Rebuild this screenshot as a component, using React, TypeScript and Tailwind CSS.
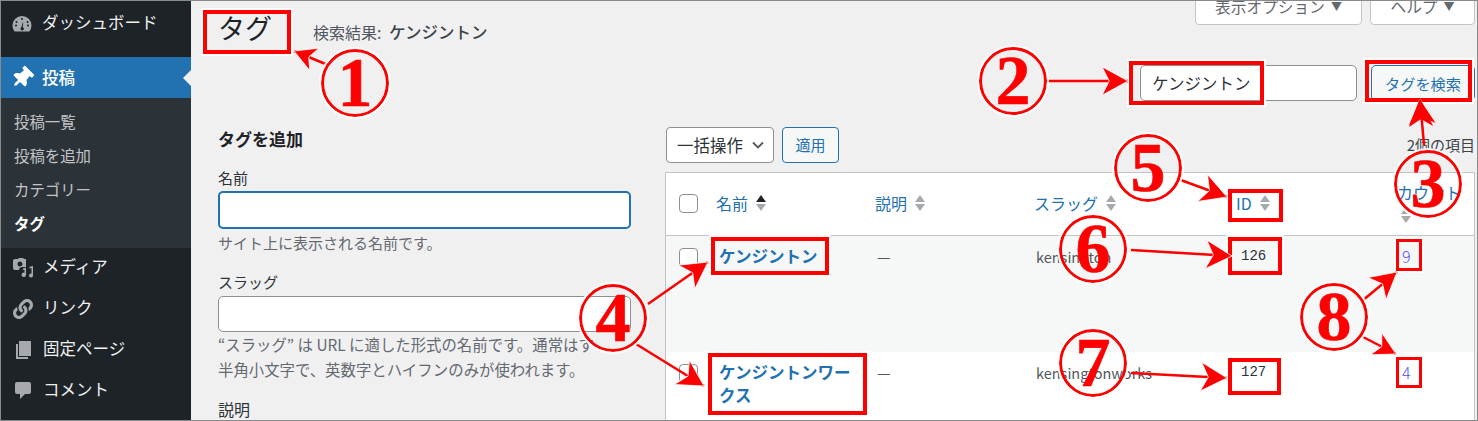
import React from "react";
import { FaLink, FaThumbtack } from "react-icons/fa";

const jp = "font-['Noto_Sans_CJK_JP','Noto_Sans',sans-serif]";

const SortArrows = ({ active, className = "ml-[7px]" }: { active?: boolean; className?: string }) => (
  <svg width="12" height="18" viewBox="0 0 12 18" className={`shrink-0 ${className}`}>
    <path d="M6 1l5 7H1z" className={active ? "fill-[#1d2327]" : "fill-[#a7aaad]"} />
    <path d="M6 17l5-7H1z" fill="#a7aaad" />
  </svg>
);

const Checkbox = () => (
  <span className="block h-[19px] w-[19px] rounded-[4px] border border-[#8c8f94] bg-white" />
);

const SubItem = ({ children, bold }: { children: React.ReactNode; bold?: boolean }) => (
  <div
    className={`flex h-[34px] items-center pb-[2px] pl-[13px] text-[15.4px] ${
      bold ? "font-bold text-white" : "text-[#c3c4c7]"
    }`}
  >
    {children}
  </div>
);

const MenuItem = ({ icon, label }: { icon: React.ReactNode; label: string }) => (
  <div className="flex h-[41px] items-center text-[16.5px] text-[#f0f0f1]">
    <span className="flex w-[42px] justify-center pb-[2px] pl-[1px] text-[#a7aaad]">{icon}</span>
    <span className="pb-[4px]">{label}</span>
  </div>
);

function Sidebar() {
  return (
    <aside className="flex w-[190px] shrink-0 flex-col bg-[#1d2327]">
      <div className="flex h-[56px] items-start pt-[9px] text-[16.5px] text-[#f0f0f1]">
        <span className="flex w-[41px] justify-center pt-[4px]">
          <svg width="20" height="20" viewBox="0 0 20 20" fill="#a7aaad">
            <path d="M10 2a9.5 9.5 0 0 0-9.5 9.5c0 2.3.8 4.4 2.2 6h14.6a9.4 9.4 0 0 0 2.2-6A9.500 9.500 0 0 0 10 2zm0 2a1 1 0 1 1 0 2 1 1 0 0 1 0-2zM4.500 7a1 1 0 1 1 0 2 1 1 0 0 1 0-2zm11 0a1 1 0 1 1 0 2 1 1 0 0 1 0-2zM3 11.500a1 1 0 1 1 2 0 1 1 0 0 1-2 0zm12 0a1 1 0 1 1 2 0 1 1 0 0 1-2 0zM8.500 15c0-1 .7-1.500 1-2l1.200-4.500.5.100-.4 4.500c.4.500 1.100 1 1.100 1.900 0 .8-.7 1.400-1.700 1.400s-1.700-.6-1.700-1.400z" fillRule="evenodd" />
          </svg>
        </span>
        <span>ダッシュボード</span>
      </div>
      <div className="relative flex h-[41px] items-center bg-[#2271b1] text-[16.5px] font-medium text-white">
        <span className="flex w-[41px] justify-center">
          <FaThumbtack className="rotate-45 text-[22px]" />
        </span>
        <span className="pb-[1px]">投稿</span>
        <span className="absolute right-0 top-[13px] h-0 w-0 border-y-[8px] border-r-[8px] border-y-transparent border-r-[#f0f0f1]" />
      </div>
      <div className="flex h-[150px] flex-col justify-center bg-[#2c3338] pt-[1px]">
        <SubItem>投稿一覧</SubItem>
        <SubItem>投稿を追加</SubItem>
        <SubItem>カテゴリー</SubItem>
        <SubItem bold>タグ</SubItem>
      </div>
      <div>
        <MenuItem
          label="メディア"
          icon={
            <svg width="22" height="22" viewBox="0 0 22 22" fill="#a7aaad">
              <path d="M3 2h3l1-1h4l1 1h2v8H9.500A3 3 0 0 0 7 13H3a2 2 0 0 1-2-2V4a2 2 0 0 1 2-2zm5 2.500a2.500 2.500 0 1 0 0 5 2.500 2.500 0 0 0 0-5z" fillRule="evenodd" />
              <path d="M11 11.500l3-1v7.200a2.200 2.200 0 1 1-1.500-2v-3l-1.500.4zM21 9v9.500a2 2 0 1 1-1.500-1.900V11l-2 .5V9.700z" />
            </svg>
          }
        />
        <MenuItem label="リンク" icon={<FaLink className="text-[20px]" />} />
        <MenuItem
          label="固定ページ"
          icon={
            <svg width="20" height="22" viewBox="0 0 20 22" fill="#a7aaad">
              <path d="M6 2h12v15H6z" />
              <path d="M3 5h2v13h10v2H3z" />
            </svg>
          }
        />
        <MenuItem
          label="コメント"
          icon={
            <svg width="20" height="22" viewBox="0 0 20 22" fill="#a7aaad">
              <path d="M4 2h12a2 2 0 0 1 2 2v8a2 2 0 0 1-2 2h-4l-5 5v-5H4a2 2 0 0 1-2-2V4a2 2 0 0 1 2-2z" />
            </svg>
          }
        />
      </div>
    </aside>
  );
}

function AddTagForm() {
  return (
    <div className="w-[413px] shrink-0 text-[15px] text-[#3c434a]">
      <h2 className="pt-[1px] text-[17px] font-bold leading-[22px] text-[#1d2327]">タグを追加</h2>
      <div className="mt-[17px] leading-[22px] text-[#2c3338]">名前</div>
      <div className="mt-[2px] h-[38px] rounded-[5px] border-2 border-[#2271b1] bg-white" />
      <p className="mt-[3px] leading-[22px] text-[#646970]">サイト上に表示される名前です。</p>
      <div className="mt-[17px] leading-[22px] text-[#2c3338]">スラッグ</div>
      <div className="mt-[3px] h-[36px] rounded-[5px] border border-[#8c8f94] bg-white" />
      <p className="mt-[0px] text-[15.4px] leading-[25px] text-[#646970]">
        “スラッグ” は URL に適した形式の名前です。通常はす
        <br />
        半角小文字で、英数字とハイフンのみが使われます。
      </p>
      <div className="mt-[16px] text-[16px] leading-[22px] text-[#2c3338]">説明</div>
    </div>
  );
}

function TagTable() {
  const colClass = "grid grid-cols-[50px_159px_159px_202px_161px_1fr]";
  const rows = [
    { name: "ケンジントン", slug: "kensington", id: 126, count: 9, cls: "h-[116px] bg-[#f6f7f7]" },
    { name: "ケンジントンワークス", slug: "kensingtonworks", id: 127, count: 4, cls: "h-[90px] bg-white" },
  ];
  return (
    <div className="border-x border-t border-[#c3c4c7] bg-white text-[16px]">
      <div className={`${colClass} h-[63px] items-center border-b border-[#c3c4c7] pb-[2px] text-[#2271b1]`}>
        <span className="pl-[13px]">
          <Checkbox />
        </span>
        <span className="flex items-center">
          名前
          <SortArrows active />
        </span>
        <span className="flex items-center">
          説明
          <SortArrows />
        </span>
        <span className="flex items-center">
          スラッグ
          <SortArrows />
        </span>
        <span className="flex items-center">
          ID
          <SortArrows />
        </span>
        <span className="flex flex-col items-start leading-[22px]">
          <span className="-mt-[1px]">カウント</span>
          <SortArrows className="ml-[3px] mt-[3px]" />
        </span>
      </div>
      {rows.map((r) => (
        <div key={r.id} className={`${colClass} ${r.cls} pt-[9px] leading-[23px] text-[#50575e]`}>
          <span className="pl-[13px] pt-[3px]">
            <Checkbox />
          </span>
          <span className="w-[140px] pl-[3px] text-[16.5px] font-bold text-[#2271b1]">{r.name}</span>
          <span className="pl-[2px] text-[15px]">—</span>
          <span className="pl-[2px] text-[14.5px]">{r.slug}</span>
          <span className="pl-[5px] font-['Liberation_Mono',monospace] text-[14px] text-[#2c3338]">{r.id}</span>
          <span className="pl-[5px] text-[16px] font-light text-[#4f4ff0]">{r.count}</span>
        </div>
      ))}
    </div>
  );
}

const Box = ({ className }: { className: string }) => (
  <div className={`absolute border-[#ff0000] outline-2 outline-white/90 ${className}`} />
);

const Num = ({ n, className }: { n: number; className: string }) => (
  <div
    className={`absolute flex h-[68px] w-[68px] items-center justify-center rounded-full border-[3px] border-[#ff0000] font-['Liberation_Serif',serif] text-[70px] font-bold leading-none text-[#ff0000] outline-2 outline-white/90 [-webkit-text-stroke:0.6px_#ff0000] ${className}`}
  >
    {n}
  </div>
);

// [x1, y1, x2, y2] tail to tip
const arrows = [
  [327, 64, 293, 50],
  [1045, 80, 1127, 80],
  [1423, 144, 1419, 98],
  [647, 303, 707, 261],
  [635, 343, 703, 385],
  [1177, 178, 1226, 196],
  [1130, 249, 1231, 255],
  [1130, 372, 1226, 377],
  [1361, 300, 1396, 271],
  [1362, 336, 1395, 353],
];

function arrowHead(x1: number, y1: number, x2: number, y2: number) {
  const len = Math.hypot(x2 - x1, y2 - y1);
  const ux = (x2 - x1) / len;
  const uy = (y2 - y1) / len;
  const size = Math.min(26, len * 0.6);
  const back = x2 - ux * size;
  const backY = y2 - uy * size;
  const w = size * 0.55;
  const notchX = x2 - ux * size * 0.72;
  const notchY = y2 - uy * size * 0.72;
  return `${x2},${y2} ${back - uy * w},${backY + ux * w} ${notchX},${notchY} ${back + uy * w},${backY - ux * w}`;
}

function Annotations() {
  return (
    <>
      <Box className="left-[202px] top-[9px] h-[44px] w-[88px] border-[4px]" />
      <Box className="left-[1128px] top-[60px] h-[44px] w-[135px] border-[4px]" />
      <Box className="left-[1364px] top-[59px] h-[42px] w-[107px] border-[4px]" />
      <Box className="left-[1227px] top-[188px] h-[33px] w-[55px] border-[4px]" />
      <Box className="left-[1227px] top-[236px] h-[38px] w-[54px] border-[4px]" />
      <Box className="left-[1227px] top-[357px] h-[37px] w-[53px] border-[4px]" />
      <Box className="left-[1395px] top-[238px] h-[32px] w-[26px] border-[3px]" />
      <Box className="left-[1395px] top-[356px] h-[31px] w-[26px] border-[3px]" />
      <Box className="left-[710px] top-[236px] h-[38px] w-[118px] border-[4px]" />
      <Box className="left-[707px] top-[352px] h-[62px] w-[159px] border-[4px]" />
      <svg className="pointer-events-none absolute left-0 top-0" width="1478" height="421">
        {arrows.map(([a, b, c, d], i) => (
          <g key={i}>
            <line x1={a} y1={b} x2={c} y2={d} stroke="#ff0000" strokeWidth="2.500" />
            <polygon points={arrowHead(a, b, c, d)} fill="#ff0000" stroke="#ffffff" strokeWidth="0.800" />
          </g>
        ))}
        <polygon points="1419,97 1432,125 1420,118 1408,126" fill="#ff0000" />
      </svg>
      <Num n={1} className="left-[320px] top-[48px]" />
      <Num n={2} className="left-[978px] top-[46px]" />
      <Num n={3} className="left-[1393px] top-[149px]" />
      <Num n={4} className="left-[578px] top-[283px]" />
      <Num n={5} className="left-[1113px] top-[133px]" />
      <Num n={6} className="left-[1058px] top-[214px]" />
      <Num n={7} className="left-[1058px] top-[328px]" />
      <Num n={8} className="left-[1299px] top-[282px]" />
    </>
  );
}

export default function App() {
  return (
    <div className={`relative h-[421px] w-[1478px] overflow-hidden border border-[#8a8a8a] ${jp}`}>
      <div className="flex h-full">
        <Sidebar />
        <main className="min-w-0 flex-1 bg-[#f0f0f1]">
          {/* Header */}
          <div className="flex h-[64px] items-start justify-between">
            <div className="flex items-baseline pl-[27px] pt-[9px]">
              <h1 className="text-[27px] leading-[36px] text-[#1d2327]">タグ</h1>
              <span className="ml-[41px] text-[16px] text-[#50575e]">
                検索結果:{" "}
                <span className="ml-[4px] text-[16.5px] font-medium text-[#3c434a]">ケンジントン</span>
              </span>
            </div>
            <div className="mr-[2px] flex gap-[8px] text-[15.7px] text-[#646970]">
              <div className="-mt-[10px] flex h-[34px] w-[167px] items-center justify-center rounded-b-[4px] border border-[#c3c4c7] bg-white pb-[3px]">
                表示オプション <span className="ml-[6px] text-[11px]">▼</span>
              </div>
              <div className="-mt-[10px] flex h-[34px] w-[105px] items-center justify-center rounded-b-[4px] border border-[#c3c4c7] bg-white pb-[3px]">
                ヘルプ <span className="ml-[6px] text-[11px]">▼</span>
              </div>
            </div>
          </div>
          {/* Search */}
          <div className="flex h-[36px] justify-end gap-[14px] pr-[2px] text-[15.2px]">
            <div className="flex w-[217px] items-center rounded-[5px] border border-[#8c8f94] bg-white pl-[11px] text-[16.5px] text-[#2c3338]">
              ケンジントン
            </div>
            <div className="flex w-[104px] items-center justify-center rounded-[5px] border border-[#2271b1] bg-[#f6f7f7] text-[#2271b1]">
              タグを検索
            </div>
          </div>
          {/* Columns */}
          <div className="mt-[26px] flex gap-[34px] pl-[27px]">
            <AddTagForm />
            <div className="min-w-0 flex-1 pr-[2px]">
              <div className="flex h-[36px] items-center gap-[8px] pl-[1px] text-[15px]">
                <div className="flex h-[36px] w-[108px] items-center justify-between rounded-[4px] border border-[#8c8f94] bg-white pl-[10px] pr-[9px] text-[16.5px] text-[#2c3338]">
                  一括操作
                  <svg width="12" height="8" viewBox="0 0 12 8" fill="none" stroke="#50575e" strokeWidth="1.800">
                    <path d="M1 1.500l5 5 5-5" />
                  </svg>
                </div>
                <div className="flex h-[36px] w-[57px] items-center justify-center rounded-[4px] border border-[#2271b1] bg-[#f6f7f7] text-[#2271b1]">
                  適用
                </div>
                <span className="ml-auto text-[#3c434a]">2個の項目</span>
              </div>
              <div className="mt-[9px]">
                <TagTable />
              </div>
            </div>
          </div>
        </main>
      </div>
      <Annotations />
    </div>
  );
}
